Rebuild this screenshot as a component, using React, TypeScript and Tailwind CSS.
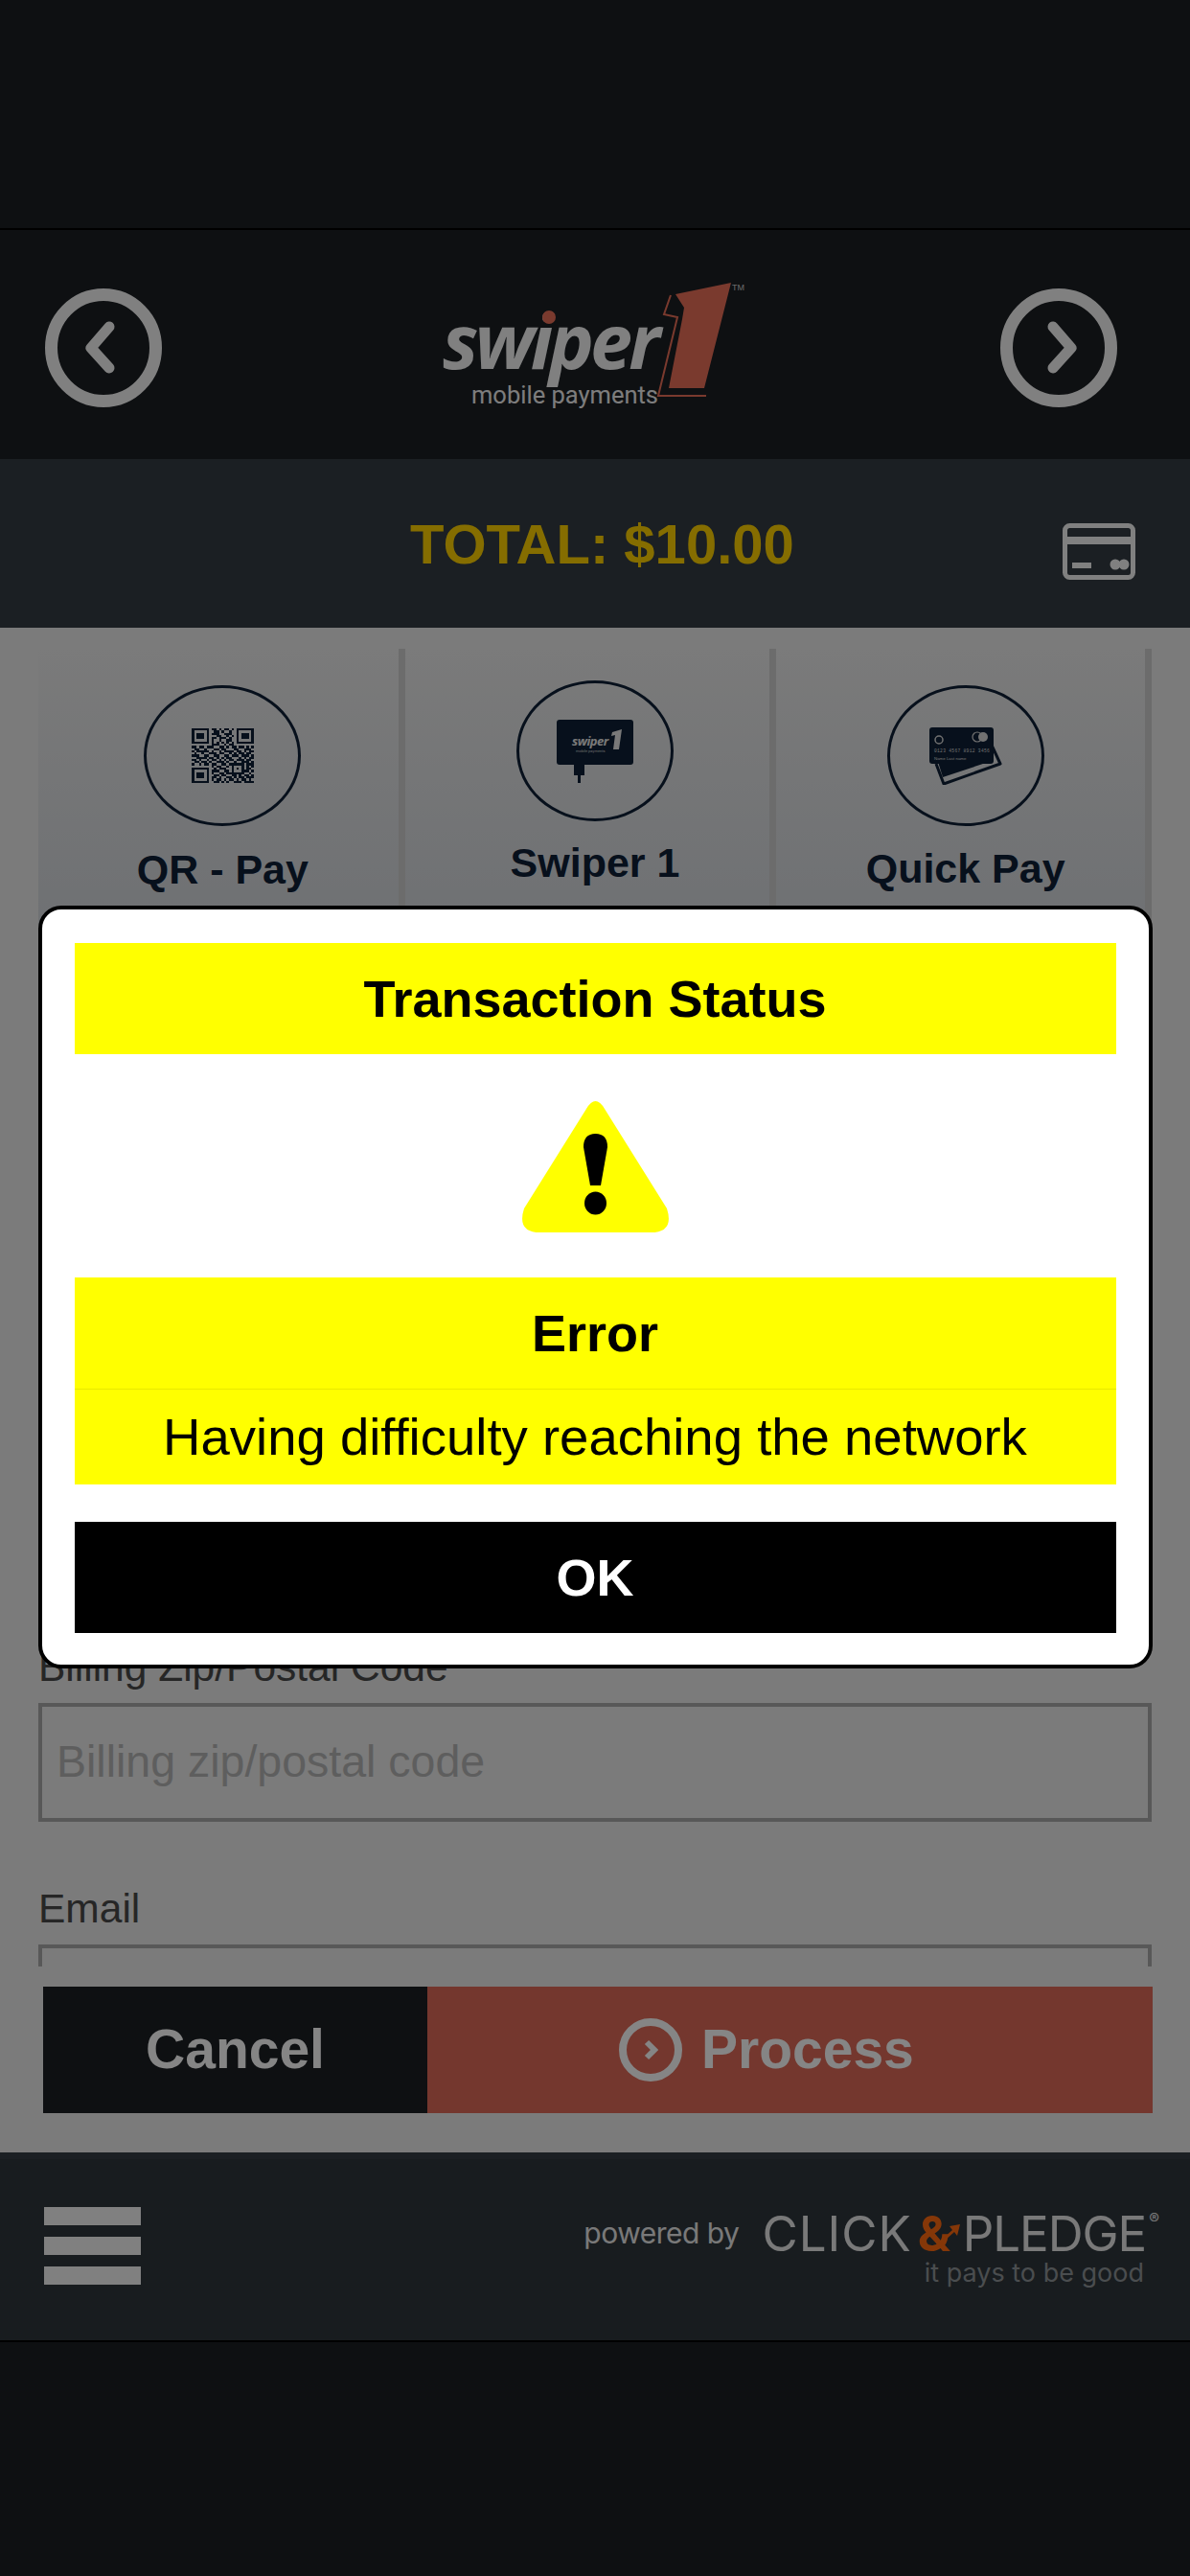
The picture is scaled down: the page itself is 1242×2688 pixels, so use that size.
import type { ReactNode } from 'react';

const qrRows = [
  '1111111011010110101111111',
  '1000001001101001001000001',
  '1011101011100111001011101',
  '1011101000110010101011101',
  '1011101011011101001011101',
  '1000001010010011001000001',
  '1111111010101010101111111',
  '0000000011100101100000000',
  '1101101110011010110110101',
  '0110010001101100011001110',
  '1011111010010111101101011',
  '0100100111011001010110110',
  '1110011001100110111011101',
  '0011110110101011000101011',
  '1101001011010101101110110',
  '0110110100111010010011101',
  '1001011011001101111110111',
  '0000000010110010100010101',
  '1111111001011100101010110',
  '1000001011100110100011101',
  '1011101010011011111110010',
  '1011101001101100110101101',
  '1011101011010011010110111',
  '1000001010110101101011010',
  '1111111001101010011101111',
];

const tabs = [
  { label: 'QR - Pay', icon: <QrIcon />, top: 'pt-[38px]', gap: 'mt-[22px]', offset: 'pl-[9px]', width: 'w-[383px]' },
  { label: 'Swiper 1', icon: <ReaderIcon />, top: 'pt-[33px]', gap: 'mt-[20px]', offset: 'pl-[16px]', width: 'w-[388px]' },
  { label: 'Quick Pay', icon: <CardsIcon />, top: 'pt-[38px]', gap: 'mt-[21px]', offset: 'pl-[10px]', width: 'w-[392px]' },
];

function QrIcon() {
  return (
    <svg width="65" height="57" viewBox="0 0 25 25" preserveAspectRatio="none" shapeRendering="crispEdges">
      {qrRows.map((row, y) =>
        row.split('').map((cell, x) =>
          cell === '1' ? <rect key={`${x}-${y}`} x={x} y={y} width="1" height="1" fill="#0f2036" /> : null,
        ),
      )}
    </svg>
  );
}

function ReaderIcon() {
  return (
    <svg width="80" height="66" viewBox="0 0 80 66">
      <rect x="0" y="0" width="80" height="47" rx="3" fill="#0f2036" />
      <rect x="18" y="46" width="11" height="12" fill="#0f2036" />
      <rect x="22" y="56" width="3" height="10" fill="#0f2036" />
      <text x="16" y="27" fontSize="13" fontWeight="700" fontStyle="italic" letterSpacing="-0.5" fontFamily="'Open Sans', sans-serif" fill="#e8e8e8">
        swiper
      </text>
      <polygon points="68,10 65,31 59,31 61,16 57,17 58,13" fill="#e8e8e8" />
      <text x="20" y="34" fontSize="4" fontFamily="Roboto, sans-serif" fill="#c8c8c8">
        mobile payments
      </text>
    </svg>
  );
}

function CardsIcon() {
  return (
    <svg width="76" height="60" viewBox="0 0 76 60">
      <path d="M62 12 L74 38 L15 59 L7 38" fill="none" stroke="#0f2036" strokeWidth="3" strokeLinejoin="round" />
      <path d="M9 36 L62 36 L14 52 Z" fill="#0f2036" />
      <rect x="0" y="0" width="67" height="38" rx="3" fill="#0f2036" />
      <circle cx="10" cy="13" r="4" fill="none" stroke="#d8d8d8" strokeWidth="1.5" />
      <circle cx="50" cy="10" r="5" fill="none" stroke="#d8d8d8" strokeWidth="1.2" />
      <circle cx="56" cy="10" r="5" fill="#d8d8d8" />
      <text x="5" y="26" fontSize="4.6" letterSpacing="0.3" fontFamily="'Liberation Mono', monospace" fill="#d8d8d8">
        0123 4567 8912 3456
      </text>
      <text x="5" y="34" fontSize="4.4" fontFamily="'Liberation Sans', sans-serif" fill="#d8d8d8">
        Name Last name
      </text>
    </svg>
  );
}

function NavCircle({ path }: { path: string }) {
  return (
    <svg width="122" height="124" viewBox="0 0 122 124" fill="none" stroke="#f6f6f6" strokeLinecap="round" strokeLinejoin="round">
      <ellipse cx="61" cy="62" rx="54.5" ry="55.5" strokeWidth="13" />
      <path d={path} strokeWidth="11" />
    </svg>
  );
}

function SwiperLogo() {
  return (
    <div className="relative flex h-[126px] w-[316px] shrink-0">
      <div className="flex w-[235px] flex-col pt-[30px]">
        <span className="font-['Open_Sans',sans-serif] text-[79px] font-bold italic leading-[60px] tracking-[-4px] text-[#f6f6f6]">
          swiper
        </span>
        <span className="mt-[12px] pl-[30px] font-['Roboto',sans-serif] text-[25.5px] leading-[30px] whitespace-nowrap text-[#f0f0f0]">
          mobile payments
        </span>
      </div>
      <span className="absolute left-[104px] top-[29px] h-[14px] w-[14px] rounded-full bg-[#ea6f58]" />
      <svg className="shrink-0 overflow-visible" width="81" height="126" viewBox="0 0 81 126">
        <polygon points="66,0 38,110 1,110 15,38 17,26 8,12" fill="#ea6f58" />
        <polyline points="3,13 -4,33 10,36 -10,118 40,118" fill="none" stroke="#ea6f58" strokeWidth="2" />
      </svg>
      <span className="mt-[-1px] ml-[-14px] font-['Liberation_Sans',sans-serif] text-[9px] leading-[12px] text-[#cccccc]">TM</span>
    </div>
  );
}

function Field({ label, placeholder, labelClass }: { label: string; placeholder?: string; labelClass: string }) {
  return (
    <div className={labelClass}>
      <p className="text-[42.5px] leading-[48px] text-[#4a4a4a]">{label}</p>
      <div className="mt-[13px] flex h-[124px] items-center border-4 border-[#aaaaaa] pl-[15px] text-[46.5px] text-[#b5b5b5]">
        {placeholder}
      </div>
    </div>
  );
}

function YellowRow({ children, className }: { children: ReactNode; className: string }) {
  return <div className={`flex items-center justify-center bg-[#ffff00] text-black ${className}`}>{children}</div>;
}

export default function App() {
  return (
    <div className="relative h-[2688px] w-[1242px] overflow-hidden bg-[#1b1f23] font-['Liberation_Sans',Arial,sans-serif]">
      {/* status bar */}
      <div className="h-[240px] border-b-2 border-black" />

      {/* header */}
      <header className="flex h-[239px] items-start pl-[47px] pt-[61px]">
        <NavCircle path="M67 40 L48 62 L67 83" />
        <div className="ml-[293px] mt-[-6px]">
          <SwiperLogo />
        </div>
        <div className="ml-[266px]">
          <NavCircle path="M55 40 L74 62 L55 83" />
        </div>
      </header>

      {/* total */}
      <div className="flex h-[176px] items-center bg-[#343c43] pl-[428px]">
        <span className="text-[58px] font-bold whitespace-nowrap text-[#ffd200]">TOTAL: $10.00</span>
        <svg className="ml-[280px] mt-[16px]" width="76" height="59" viewBox="0 0 76 59" fill="none" stroke="#f6f6f6">
          <rect x="2.5" y="2.5" width="71" height="54" rx="5" strokeWidth="5" />
          <path d="M2 18 H74" strokeWidth="8" />
          <path d="M10 44 H30" strokeWidth="6" />
          <circle cx="55" cy="43" r="5.5" fill="#f6f6f6" strokeWidth="0" />
          <circle cx="64" cy="43" r="5.5" fill="#f6f6f6" strokeWidth="0" />
        </svg>
      </div>

      {/* form */}
      <main className="h-[1591px] bg-[#ebebeb]">
        <div className="h-[1397px] overflow-hidden px-[40px] pt-[22px]">
          <div className="flex h-[290px]">
            {tabs.map((tab) => (
              <div
                key={tab.label}
                className={`flex flex-col items-center border-r-[7px] border-[#cfcfcf] bg-gradient-to-b from-[#ebebeb] to-[#d4d8dd] ${tab.width} ${tab.top} ${tab.offset}`}
              >
                <div className="flex h-[147px] w-[164px] items-center justify-center rounded-[50%] border-[3px] border-[#0f2036]">
                  {tab.icon}
                </div>
                <p className={`text-[43px] font-bold leading-[46px] text-[#0f2036] ${tab.gap}`}>{tab.label}</p>
              </div>
            ))}
          </div>
          <Field label="Billing Zip/Postal Code" placeholder="Billing zip/postal code" labelClass="mt-[749px]" />
          <Field label="Email" labelClass="mt-[67px]" />
        </div>

        <div className="ml-[45px] mr-[39px] mt-[21px] flex h-[132px] text-[57px] font-bold text-white">
          <button className="w-[401px] bg-[#1b1f23] text-center">Cancel</button>
          <button className="flex flex-1 items-center gap-[20px] bg-[#df6a58] pl-[200px]">
            <svg width="66" height="66" viewBox="0 0 66 66" fill="none" stroke="white">
              <circle cx="33" cy="33" r="29" strokeWidth="8" />
              <path d="M29 25 L37 33 L29 41" strokeWidth="6" />
            </svg>
            Process
          </button>
        </div>
      </main>

      {/* footer */}
      <footer className="flex h-[198px] border-t-[7px] border-b-2 border-[#343c43] border-b-black bg-[#2e363c] pl-[46px] pt-[50px]">
        <div className="flex flex-col gap-[12px]">
          <span className="block h-[19px] w-[101px] bg-[#f6f6f6]" />
          <span className="block h-[19px] w-[101px] bg-[#f6f6f6]" />
          <span className="block h-[19px] w-[101px] bg-[#f6f6f6]" />
        </div>
        <div className="ml-auto mt-[4px] flex items-start pr-[32px] font-['Inter',sans-serif] text-[#e8e8e8]">
          <span className="mt-[3px] text-[30px] leading-[40px] tracking-[-0.5px]">powered by</span>
          <div className="ml-[24px] flex flex-col">
            <div className="flex items-start">
              <span className="text-[51px] leading-[48px] tracking-[1px]">CLICK</span>
              <span className="relative ml-[6px] w-[47px] text-[51px] font-bold leading-[48px] text-[#ff6a10]">
                &amp;
                <svg className="absolute left-[26px] top-[14px]" width="18" height="16" viewBox="0 0 18 16" fill="#ff6a10">
                  <path d="M18 0 L15 12 L12 8 L3 16 L1 14 L10 6 L7 2 Z" />
                </svg>
              </span>
              <span className="text-[51px] leading-[48px] tracking-[-1px]">PLEDGE</span>
              <span className="ml-[3px] text-[16px] leading-[16px]">®</span>
            </div>
            <span className="mt-[2px] pr-[16px] text-right text-[27px] leading-[30px] text-[#8f9498]">it pays to be good</span>
          </div>
        </div>
      </footer>

      <div className="h-[242px] bg-[#1b1f23]" />

      {/* dialog */}
      <div className="absolute inset-0 flex items-center justify-center bg-black/48 pb-[2px]">
        <div className="h-[796px] w-[1163px] rounded-[24px] border-4 border-black bg-white px-[34px] pt-[35px]">
          <YellowRow className="h-[116px] text-[54px] font-bold">Transaction Status</YellowRow>
          <div className="flex justify-center py-[47px]">
            <svg width="155" height="139" viewBox="0 0 155 139">
              <path d="M68 10 Q77.5 -6 87 10 L152 114 Q160 139 135 139 L20 139 Q-5 139 3 114 Z" fill="#ffff00" />
              <path d="M65 50 Q65 36 77.5 36 Q90 36 90 50 L83 90 L72 90 Z" fill="black" />
              <ellipse cx="77.5" cy="108.5" rx="11.5" ry="12" fill="black" />
            </svg>
          </div>
          <YellowRow className="h-[117px] border-b border-[#e8e800] text-[54px] font-bold">Error</YellowRow>
          <YellowRow className="h-[99px] text-[54.5px]">Having difficulty reaching the network</YellowRow>
          <button className="mt-[39px] h-[116px] w-full bg-black text-[54px] font-bold text-white">OK</button>
        </div>
      </div>
    </div>
  );
}
